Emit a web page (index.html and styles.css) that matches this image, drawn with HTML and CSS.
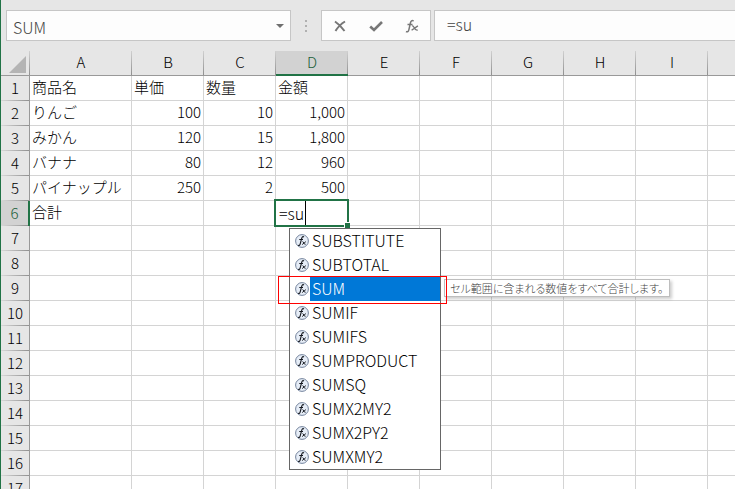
FILE: index.html
```html
<!DOCTYPE html>
<html lang="ja">
<head>
    <meta charset="UTF-8">
    <meta name="viewport" content="width=device-width, initial-scale=1.0">
    <title>SUM</title>
    <link rel="stylesheet" href="styles.css">
</head>
<body>
    <svg class="defs" width="0" height="0" aria-hidden="true">
        <symbol id="fx" viewBox="0 0 14 14">
            <circle cx="7" cy="7" r="6.400" fill="#e6edf7" stroke="#74839c" stroke-width="1"/>
            <path d="M9 3C8 2.200 7.100 2.800 6.700 4.300L5.200 9.800C4.900 11.200 4.200 11.800 3.100 11.200M4.300 5.500H8" fill="none" stroke="#15181f" stroke-width="1.100"/>
            <path d="M7.500 7.600C8.700 7.200 8.700 10.900 10.600 10.300M10.900 7.600L7.100 10.600" fill="none" stroke="#15181f" stroke-width="0.900"/>
        </symbol>
    </svg>

    <div class="formula-bar">
        <div class="name-box">
            <input type="text" value="SUM" aria-label="名前ボックス">
            <button type="button" aria-label="名前の一覧">
                <svg width="8" height="4" viewBox="0 0 8 4"><path d="M0 0H8L4 4Z" fill="#6f6f6f"/></svg>
            </button>
        </div>
        <div class="grip"><i></i><i></i><i></i></div>
        <div class="bar-buttons">
            <button type="button" aria-label="キャンセル">
                <svg width="14" height="14" viewBox="0 0 14 14"><path d="M2 2.500C5 4.500 9 8.500 11.500 12M12 2.500C8.500 4.500 5 8 2.500 12" fill="none" stroke="#777" stroke-width="2"/></svg>
            </button>
            <button type="button" aria-label="入力">
                <svg width="14" height="14" viewBox="0 0 14 14"><path d="M1.200 7.500L5 11L13 3" fill="none" stroke="#777" stroke-width="2.600"/></svg>
            </button>
            <button type="button" aria-label="関数の挿入">
                <svg width="14" height="14" viewBox="0 0 14 14">
                    <path d="M8.600 2C7 1 5.900 1.900 5.400 4L3.900 10.600C3.500 12.500 2.400 13.300 1 12.500M2.500 5.500H7.500" fill="none" stroke="#777" stroke-width="1.500"/>
                    <path d="M7 7C9.500 6 9 12.200 12.700 11M12.900 6.900L6.600 11.300" fill="none" stroke="#777" stroke-width="1.400"/>
                </svg>
            </button>
        </div>
        <input class="formula" type="text" value="=su" aria-label="数式バー">
    </div>

    <table class="sheet">
        <colgroup>
            <col class="col-head">
            <col class="col-a">
            <col class="col"><col class="col"><col class="col"><col class="col">
            <col class="col"><col class="col"><col class="col"><col class="col">
            <col>
        </colgroup>
        <thead>
            <tr>
                <th class="corner"><svg width="17" height="17" viewBox="0 0 17 17"><path d="M17 0V17H0Z" fill="#b4b4b4"/></svg></th>
                <th>A</th><th>B</th><th>C</th><th class="active">D</th><th>E</th>
                <th>F</th><th>G</th><th>H</th><th>I</th><th></th>
            </tr>
        </thead>
        <tbody id="rows">
            <tr><th>1</th><td>商品名</td><td>単価</td><td>数量</td><td>金額</td><td></td><td></td><td></td><td></td><td></td><td></td></tr>
            <tr><th>2</th><td>りんご</td><td class="num">100</td><td class="num">10</td><td class="num">1,000</td><td></td><td></td><td></td><td></td><td></td><td></td></tr>
            <tr><th>3</th><td>みかん</td><td class="num">120</td><td class="num">15</td><td class="num">1,800</td><td></td><td></td><td></td><td></td><td></td><td></td></tr>
            <tr><th>4</th><td>バナナ</td><td class="num">80</td><td class="num">12</td><td class="num">960</td><td></td><td></td><td></td><td></td><td></td><td></td></tr>
            <tr><th>5</th><td>パイナップル</td><td class="num">250</td><td class="num">2</td><td class="num">500</td><td></td><td></td><td></td><td></td><td></td><td></td></tr>
            <tr>
                <th class="active">6</th><td>合計</td><td></td><td></td>
                <td class="editing">
                    <div class="editor">
                        <input type="text" value="=su" aria-label="D6">
                        <span class="caret"></span>
                        <span class="handle"></span>
                    </div>
                    <ul class="suggest">
                        <li><button type="button"><svg><use href="#fx"/></svg><span>SUBSTITUTE</span></button></li>
                        <li><button type="button"><svg><use href="#fx"/></svg><span>SUBTOTAL</span></button></li>
                        <li class="selected">
                            <button type="button"><svg><use href="#fx"/></svg><span>SUM</span></button>
                            <div class="tip">セル範囲に含まれる数値をすべて合計します。</div>
                            <div class="marker"></div>
                        </li>
                        <li><button type="button"><svg><use href="#fx"/></svg><span>SUMIF</span></button></li>
                        <li><button type="button"><svg><use href="#fx"/></svg><span>SUMIFS</span></button></li>
                        <li><button type="button"><svg><use href="#fx"/></svg><span>SUMPRODUCT</span></button></li>
                        <li><button type="button"><svg><use href="#fx"/></svg><span>SUMSQ</span></button></li>
                        <li><button type="button"><svg><use href="#fx"/></svg><span>SUMX2MY2</span></button></li>
                        <li><button type="button"><svg><use href="#fx"/></svg><span>SUMX2PY2</span></button></li>
                        <li><button type="button"><svg><use href="#fx"/></svg><span>SUMXMY2</span></button></li>
                    </ul>
                </td>
                <td></td><td></td><td></td><td></td><td></td><td></td>
            </tr>
        </tbody>
    </table>

    <script>
        // Fill the window with empty rows
        const rows = document.getElementById('rows');
        const last = Math.ceil((window.innerHeight - 76) / 25);
        for (let i = 7; i <= last; i++) {
            const tr = document.createElement('tr');
            tr.innerHTML = `<th>${i}</th>` + '<td></td>'.repeat(10);
            rows.appendChild(tr);
        }
    </script>
</body>
</html>
```

FILE: styles.css
```css
* {
    box-sizing: border-box;
}

body {
    margin: 0;
    height: 100vh;
    overflow: hidden;
    border-left: 1px solid #217346;
    background-color: #fff;
    color: #000;
    font-family: "Noto Sans CJK JP", sans-serif;
    font-size: 15px;
    font-weight: 300;
}

input,
button {
    margin: 0;
    padding: 0;
    border: none;
    outline: none;
    background: none;
    color: inherit;
    font: inherit;
}

svg {
    display: block;
}

.defs {
    position: absolute;
}

/* formula bar */
.formula-bar {
    display: flex;
    padding: 10px 0 10px 5px;
    background-color: #e6e6e6;
    color: #444;
    font-size: 16px;
}

.name-box,
.bar-buttons,
.formula {
    height: 31px;
    border: 1px solid #c6c6c6;
    background-color: #fdfdfd;
}

.name-box {
    display: flex;
    width: 285px;
}

.name-box input {
    flex: 1;
    min-width: 0;
    padding: 2px 0 0 6px;
}

.name-box button {
    display: flex;
    align-items: center;
    justify-content: center;
    width: 20px;
}

.grip {
    display: flex;
    flex-direction: column;
    align-items: center;
    justify-content: center;
    gap: 3px;
    width: 30px;
}

.grip i {
    width: 2px;
    height: 2px;
    background-color: #b0b0b0;
}

.bar-buttons {
    display: flex;
    width: 110px;
    margin-right: 3px;
}

.bar-buttons button {
    display: flex;
    flex: 1;
    align-items: center;
    justify-content: center;
}

.formula {
    flex: 1;
    min-width: 0;
    padding: 0 0 4px 12px;
    border-right: none;
}

/* sheet */
.sheet {
    width: 100%;
    table-layout: fixed;
    border-collapse: separate;
    border-spacing: 0;
}

.col-head {
    width: 29px;
}

.col-a {
    width: 102px;
}

.col {
    width: 72px;
}

.sheet th,
.sheet td {
    height: 25px;
    padding: 0 2px 2px;
    line-height: 22px;
    white-space: nowrap;
}

.sheet td {
    border-right: 1px solid #d4d4d4;
    border-bottom: 1px solid #d4d4d4;
}

.sheet td:last-child {
    border-right: none;
}

.sheet th {
    padding: 0 0 2px;
    background-color: #e6e6e6;
    font-weight: 300;
    text-align: center;
}

.sheet thead th {
    border-bottom: 1px solid #999;
    background-image: linear-gradient(#d0d0d0, #909090);
    background-position: right;
    background-repeat: no-repeat;
    background-size: 1px 100%;
}

.sheet thead th:last-child {
    background-image: none;
}

.sheet tbody th {
    border-right: 1px solid #999;
    background-image: linear-gradient(to right, #d8d8d8, #909090);
    background-position: bottom;
    background-repeat: no-repeat;
    background-size: 100% 1px;
}

.sheet thead .corner svg {
    margin: 4px 0 0 8px;
}

.sheet thead .active {
    padding-bottom: 1px;
    border-bottom: 2px solid #217346;
    background-color: #d2d2d2;
    color: #1b5e39;
}

.sheet tbody .active {
    border-right: 2px solid #217346;
    background-color: #d2d2d2;
    color: #1b5e39;
}

.sheet .num {
    text-align: right;
}

/* cell being edited */
.sheet .editing {
    position: relative;
    padding: 0;
}

.editor {
    position: absolute;
    top: -2px;
    left: -2px;
    width: 75px;
    height: 28px;
    border: 2px solid #217346;
    background-color: #fff;
    font-size: 16px;
}

.editor input {
    display: block;
    width: 100%;
    height: 24px;
    padding-left: 3px;
}

.caret {
    position: absolute;
    top: 0;
    left: 29px;
    width: 1px;
    height: 24px;
    background-color: #000;
}

.handle {
    position: absolute;
    right: -3px;
    bottom: -3px;
    width: 6px;
    height: 6px;
    border-top: 1px solid #fff;
    border-left: 1px solid #fff;
    background-color: #217346;
}

/* function list */
.suggest {
    position: absolute;
    z-index: 1;
    top: 27px;
    left: 13px;
    width: 152px;
    margin: 0;
    padding: 0;
    border: 1px solid #666;
    background-color: #fff;
    font-size: 16px;
    list-style: none;
}

.suggest li {
    position: relative;
}

.suggest button {
    display: flex;
    align-items: center;
    gap: 1px;
    width: 100%;
    height: 24px;
    padding-left: 5px;
    text-align: left;
}

.suggest svg {
    width: 14px;
    height: 14px;
}

.suggest span {
    flex: 1;
    padding: 0 0 2px 2px;
    line-height: 22px;
}

.selected span {
    background-color: #0078d7;
    color: #fff;
}

.tip {
    position: absolute;
    top: 2px;
    left: 154px;
    padding: 0 6px 0 5px;
    border: 1px solid #bebebe;
    background-color: #fff;
    box-shadow: 2px 2px 3px rgba(0, 0, 0, 0.2);
    color: #444;
    font-size: 11px;
    line-height: 16px;
    font-feature-settings: "palt";
}

.marker {
    position: absolute;
    top: -1px;
    left: -12px;
    width: 169px;
    height: 28px;
    border: 1px solid #f00;
    pointer-events: none;
}
```
